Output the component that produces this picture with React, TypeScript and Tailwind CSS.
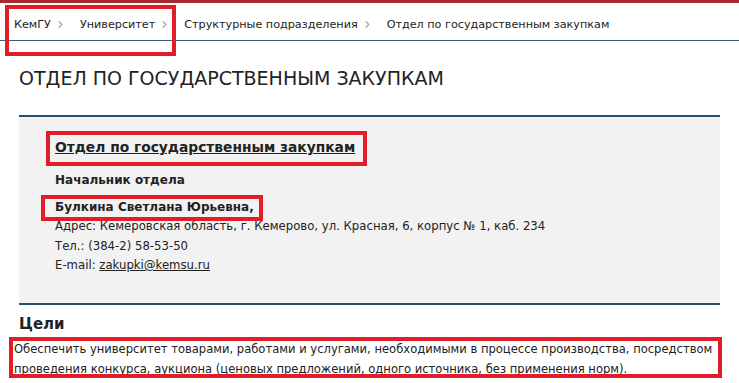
import { ChevronRight } from "lucide-react";

const crumbs = ["КемГУ", "Университет", "Структурные подразделения", "Отдел по государственным закупкам"];

// red annotation frames drawn over the page
const marks = [
  "left-[5px] top-[5px] w-[171px] h-[51px]",
  "left-[46px] top-[131px] w-[321px] h-[35px]",
  "left-[41px] top-[195px] w-[222px] h-[26px]",
  "left-[9px] top-[337px] w-[713px] h-[41px]",
];

export default function App() {
  return (
    <div className="relative w-[739px] h-[383px] overflow-hidden bg-white text-[#222] font-['DejaVu_Sans',Verdana,sans-serif]">
      <div className="h-[3px] bg-[#a8292b]" />

      {/* Breadcrumbs */}
      <nav className="h-[38px] flex items-center pt-[7px] pl-[14px] border-b border-[#36607d] text-[11.2px]">
        {crumbs.map((c, i) => (
          <div key={c} className="flex items-center">
            <span>{c}</span>
            {i < crumbs.length - 1 && (
              <ChevronRight className="w-[11px] h-[11px] text-[#b0b0b0] ml-[4px] mr-[14px]" strokeWidth={3.5} />
            )}
          </div>
        ))}
      </nav>

      <h1 className="pl-[19px] pt-[26px] text-[19px] leading-[22px] text-[#222]">ОТДЕЛ ПО ГОСУДАРСТВЕННЫМ ЗАКУПКАМ</h1>

      {/* Info box */}
      <div className="mx-[19px] mt-[26px] h-[190px] bg-[#f2f2f2] border-t-2 border-b-2 border-[#28506c] pl-[36px] pt-[20px] text-[11.7px]">
        <a className="font-bold text-[13.8px] underline leading-[20px] block">Отдел по государственным закупкам</a>
        <div className="font-bold text-[12px] mt-[13px] leading-[20px]">Начальник отдела</div>
        <div className="font-bold text-[12px] mt-[7px] leading-[20px]">Булкина Светлана Юрьевна,</div>
        <div className="leading-[19.5px]">Адрес: Кемеровская область, г. Кемерово, ул. Красная, 6, корпус № 1, каб. 234</div>
        <div className="leading-[19.5px]">Тел.: (384-2) 58-53-50</div>
        <div className="leading-[19.5px]">
          E-mail: <a className="underline">zakupki@kemsu.ru</a>
        </div>
      </div>

      <h2 className="pl-[19px] mt-[9px] font-bold text-[15px] leading-[20px]">Цели</h2>
      <p className="pl-[14px] pr-[10px] mt-[5px] text-[12.85px] leading-[20px] font-['DejaVu_Sans_Condensed','DejaVu_Sans',sans-serif]">
        Обеспечить университет товарами, работами и услугами, необходимыми в процессе производства, посредством проведения конкурса, аукциона (ценовых предложений, одного источника, без применения норм).
      </p>

      {marks.map((m) => (
        <div key={m} className={`absolute border-[4px] border-[#e21d2a] ${m}`} />
      ))}
    </div>
  );
}
